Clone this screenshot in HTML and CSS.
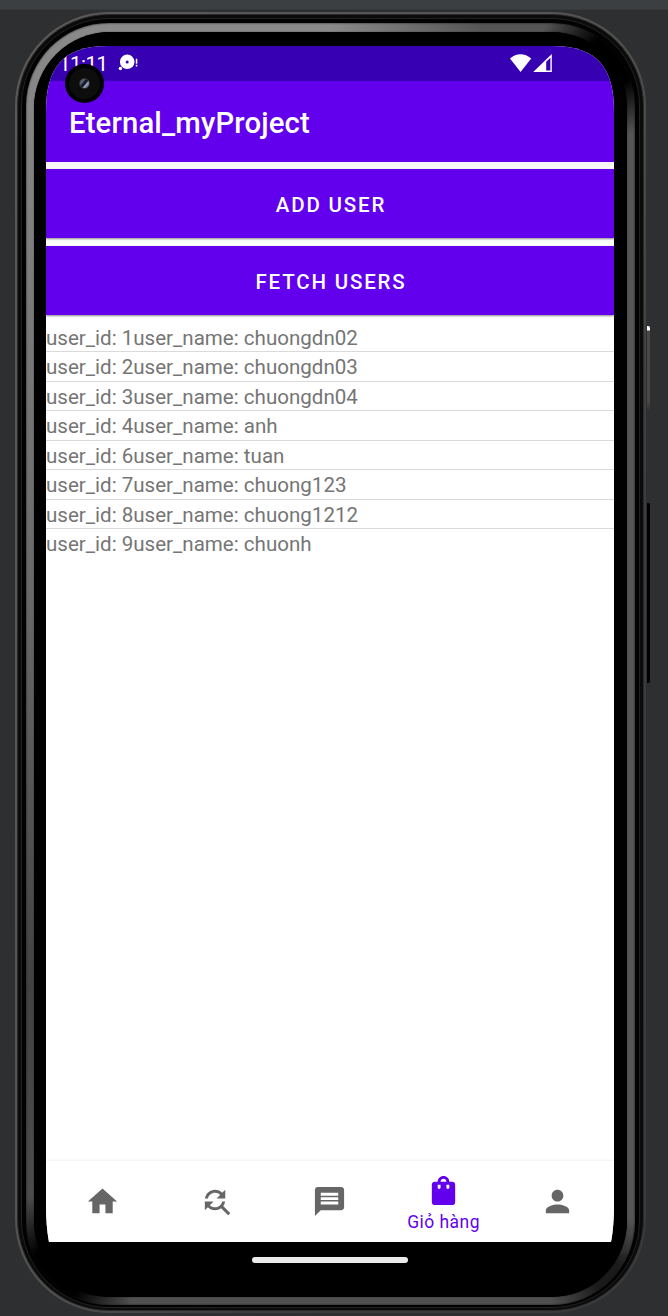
FILE: index.html
```html
<!DOCTYPE html>
<html lang="vi">
<head>
<meta charset="utf-8">
<title>Eternal_myProject</title>
<link rel="stylesheet" href="styles.css">
</head>
<body>
<div class="toolbar"></div>
<div class="stage">
  <div class="phone">
    <i class="key power"></i>
    <i class="key volume"></i>
    <div class="groove"><div class="groove-line"><div class="rim"><div class="bezel">
      <div class="screen">
        <header class="status">
          <span class="clock">11:11</span>
          <svg class="notice" viewBox="0 0 20 18"><path fill-rule="evenodd" d="M9.2.5a7.3 7.3 0 1 1 0 14.6a7.3 7.3 0 0 1 0-14.6zm0 6a1.5 1.5 0 1 0 0 3a1.5 1.5 0 0 0 0-3z"/><circle cx="2.4" cy="14.5" r="1.7"/><path d="M17.8 4.7h1.5v5h-1.5zM17.8 10.8h1.5v1.7h-1.5z"/></svg>
          <svg class="signals" viewBox="0 0 42 18"><path d="M0 4.6C6-1.2 15-1.2 21.2 4.6L10.6 18z"/><path fill-rule="evenodd" d="M41.8 0v18H23.2zM36.2 7.8V16.5h4.2V3.8z"/></svg>
        </header>
        <div class="camera"><i></i></div>
        <h1 class="appbar">Eternal_myProject</h1>
        <main class="content">
          <button class="action">Add user</button>
          <button class="action">Fetch users</button>
          <ul class="users">
            <li>user_id: 1user_name: chuongdn02</li>
            <li>user_id: 2user_name: chuongdn03</li>
            <li>user_id: 3user_name: chuongdn04</li>
            <li>user_id: 4user_name: anh</li>
            <li>user_id: 6user_name: tuan</li>
            <li>user_id: 7user_name: chuong123</li>
            <li>user_id: 8user_name: chuong1212</li>
            <li>user_id: 9user_name: chuonh</li>
          </ul>
        </main>
        <nav class="tabs">
          <a class="tab"><svg viewBox="0 0 24 24"><path d="M10 20v-6h4v6h5v-8h3L12 3 2 12h3v8z"/></svg></a>
          <a class="tab"><svg viewBox="0 0 24 24"><path d="M11 6c1.38 0 2.63.56 3.54 1.46L12 10h6V4l-2.05 2.05C14.68 4.78 12.93 4 11 4c-3.53 0-6.43 2.61-6.92 6H6.1c.46-2.28 2.48-4 4.9-4zm5.64 9.14c.66-.9 1.12-1.97 1.28-3.14H15.9c-.46 2.28-2.48 4-4.9 4-1.38 0-2.63-.56-3.54-1.46L10 12H4v6l2.05-2.05C7.32 17.22 9.07 18 11 18c1.55 0 2.98-.51 4.14-1.36L20 21.49 21.49 20l-4.85-4.86z"/></svg></a>
          <a class="tab"><svg viewBox="0 0 24 24"><path d="M20 2H4c-1.1 0-1.99.9-1.99 2L2 22l4-4h14c1.1 0 2-.9 2-2V4c0-1.1-.9-2-2-2zm-2 12H6v-2h12v2zm0-3H6V9h12v2zm0-3H6V6h12v2z"/></svg></a>
          <a class="tab active"><svg viewBox="0 0 24 24"><path d="M18 6h-2c0-2.21-1.79-4-4-4S8 3.79 8 6H6c-1.1 0-2 .9-2 2v12c0 1.1.9 2 2 2h12c1.1 0 2-.9 2-2V8c0-1.1-.9-2-2-2zm-8 4c0 .55-.45 1-1 1s-1-.45-1-1V8h2v2zm2-6c1.1 0 2 .9 2 2h-4c0-1.1.9-2 2-2zm4 6c0 .55-.45 1-1 1s-1-.45-1-1V8h2v2z"/></svg><span>Giỏ hàng</span></a>
          <a class="tab"><svg viewBox="0 0 24 24"><path d="M12 12c2.21 0 4-1.79 4-4s-1.79-4-4-4-4 1.79-4 4 1.79 4 4 4zm0 2c-2.67 0-8 1.34-8 4v2h16v-2c0-2.66-5.33-4-8-4z"/></svg></a>
        </nav>
      </div>
      <div class="gesture"><i></i></div>
    </div></div></div></div>
  </div>
</div>
</body>
</html>
```
FILE: styles.css
```css
* { box-sizing: border-box; }
body {
  margin: 0;
  height: 1316px;
  overflow: hidden;
  background: #2d2f31;
  font-family: Roboto, "Noto Sans", sans-serif;
}
.toolbar { height: 10px; background: #3c3f41; border-bottom: 1px solid #36393b; }
.stage { padding: 2px 0 0 15px; }

/* device frame, from the outer edge inwards */
.phone {
  position: relative;
  width: 631px;
  height: 1301px;
  padding: 2px;
  border-radius: 94px;
  background: linear-gradient(115deg, #5a5957 0%, #555452 45%, #3c3c3c 70%, #3a3a3a 100%);
}
.groove { height: 100%; padding: 3px 3px 2px; border-radius: 92px; background: #0b0b0b; border: 1px solid #2a2a2a; }
.groove-line { height: 100%; padding: 4px 4px 2px; border-radius: 88px; background: #020202; border: 1px solid #222; }
.rim {
  height: 100%;
  padding: 9px 8px 8px;
  border-radius: 83px;
  background:
    radial-gradient(circle at 96% 3%, #000 0 25px, transparent 75px),
    radial-gradient(circle at 5% 97.5%, #000 0 28px, transparent 80px),
    radial-gradient(circle at 95% 97.5%, #000a 0 15px, transparent 60px),
    linear-gradient(90deg, transparent 0 50%, #555 75%) right top / 100% 96% no-repeat,
    linear-gradient(#8a8a8a 0, #808080 14%, #686868 45%, #424242 75%, #505050 100%);
  box-shadow: inset 0 0 2px #111;
}
.bezel { height: 100%; padding: 14px 12px 0; border-radius: 76px; background: #000; box-shadow: 0 0 1px #000; }
.key { position: absolute; left: 632px; width: 3px; border-radius: 0 2px 2px 0; }
.power { top: 314px; height: 84px; background: linear-gradient(#fff 0 4px, #484848 5px, #484848 90%, #333); }
.volume { top: 491px; height: 180px; background: #000; }

/* app screen */
.screen {
  position: relative;
  display: flex;
  flex-direction: column;
  width: 568px;
  height: 1196px;
  background: #fff;
  clip-path: path("M0 66C0 22 16 0 62 0H506C552 0 568 22 568 66V1158Q568 1180 565 1196H3Q0 1180 0 1158Z");
}
.status {
  display: flex;
  flex: none;
  height: 35px;
  padding: 8px 62px 0 13px;
  color: #fff;
  background: #3700b3;
}
.status svg { fill: #fff; height: 18px; flex: none; }
.clock { width: 59px; font-size: 20.5px; line-height: 21px; letter-spacing: -.5px; }
.notice { width: 20px; }
.signals { width: 42px; margin-left: auto; }
.camera {
  position: absolute;
  left: 19px;
  top: 18px;
  display: grid;
  place-items: center;
  width: 39px;
  height: 39px;
  border-radius: 50%;
  background: #0d0d0d;
  border: 4px solid #000;
}
.camera i {
  width: 11px;
  height: 11px;
  border-radius: 50%;
  background: linear-gradient(130deg, #566078 0 30%, #161a24 42% 55%, #9babc8 65%, #3a4258);
  border: 1px solid #333;
}
.appbar {
  flex: none;
  display: flex;
  align-items: center;
  height: 81px;
  margin: 0;
  padding: 2px 23px 0;
  color: #fff;
  background: #6200ee;
  font-size: 29.3px;
  font-weight: 500;
  letter-spacing: .15px;
}
.content {
  flex: 1;
  display: flex;
  flex-direction: column;
  gap: 8px;
  padding-top: 7px;
  background: linear-gradient(#f5f5f5, #fff 12px);
}
.action {
  flex: none;
  height: 69px;
  border: 0;
  padding: 2px 0 0 2px;
  color: #fff;
  background: #6200ee;
  box-shadow: 0 1px 2px #0007;
  font: 500 20.5px Roboto, sans-serif;
  letter-spacing: 1.83px;
  text-transform: uppercase;
}
.users { margin: 0; padding: 0; list-style: none; color: #757575; font-size: 20.55px; line-height: 30px; }
.users li { height: 29.45px; white-space: nowrap; border-bottom: 1.5px solid #dadada; }
.users li:last-child { border: 0; }
.tabs {
  flex: none;
  display: grid;
  grid-template-columns: repeat(5, 1fr);
  height: 81px;
  background: #fff;
  box-shadow: 0 -1px 2px #0000000f;
}
.tab { display: flex; flex-direction: column; align-items: center; justify-content: center; color: #666; }
.tab svg { width: 35px; height: 35px; fill: currentColor; }
.tab.active { color: #6200ee; justify-content: flex-start; padding-top: 12px; }
.tab span { font-size: 17.5px; line-height: 28px; letter-spacing: .45px; white-space: nowrap; }
.gesture { display: grid; place-items: center; height: 36px; padding-right: 2px; }
.gesture i { width: 156px; height: 6px; border-radius: 3px; background: #ebebeb; }
```
